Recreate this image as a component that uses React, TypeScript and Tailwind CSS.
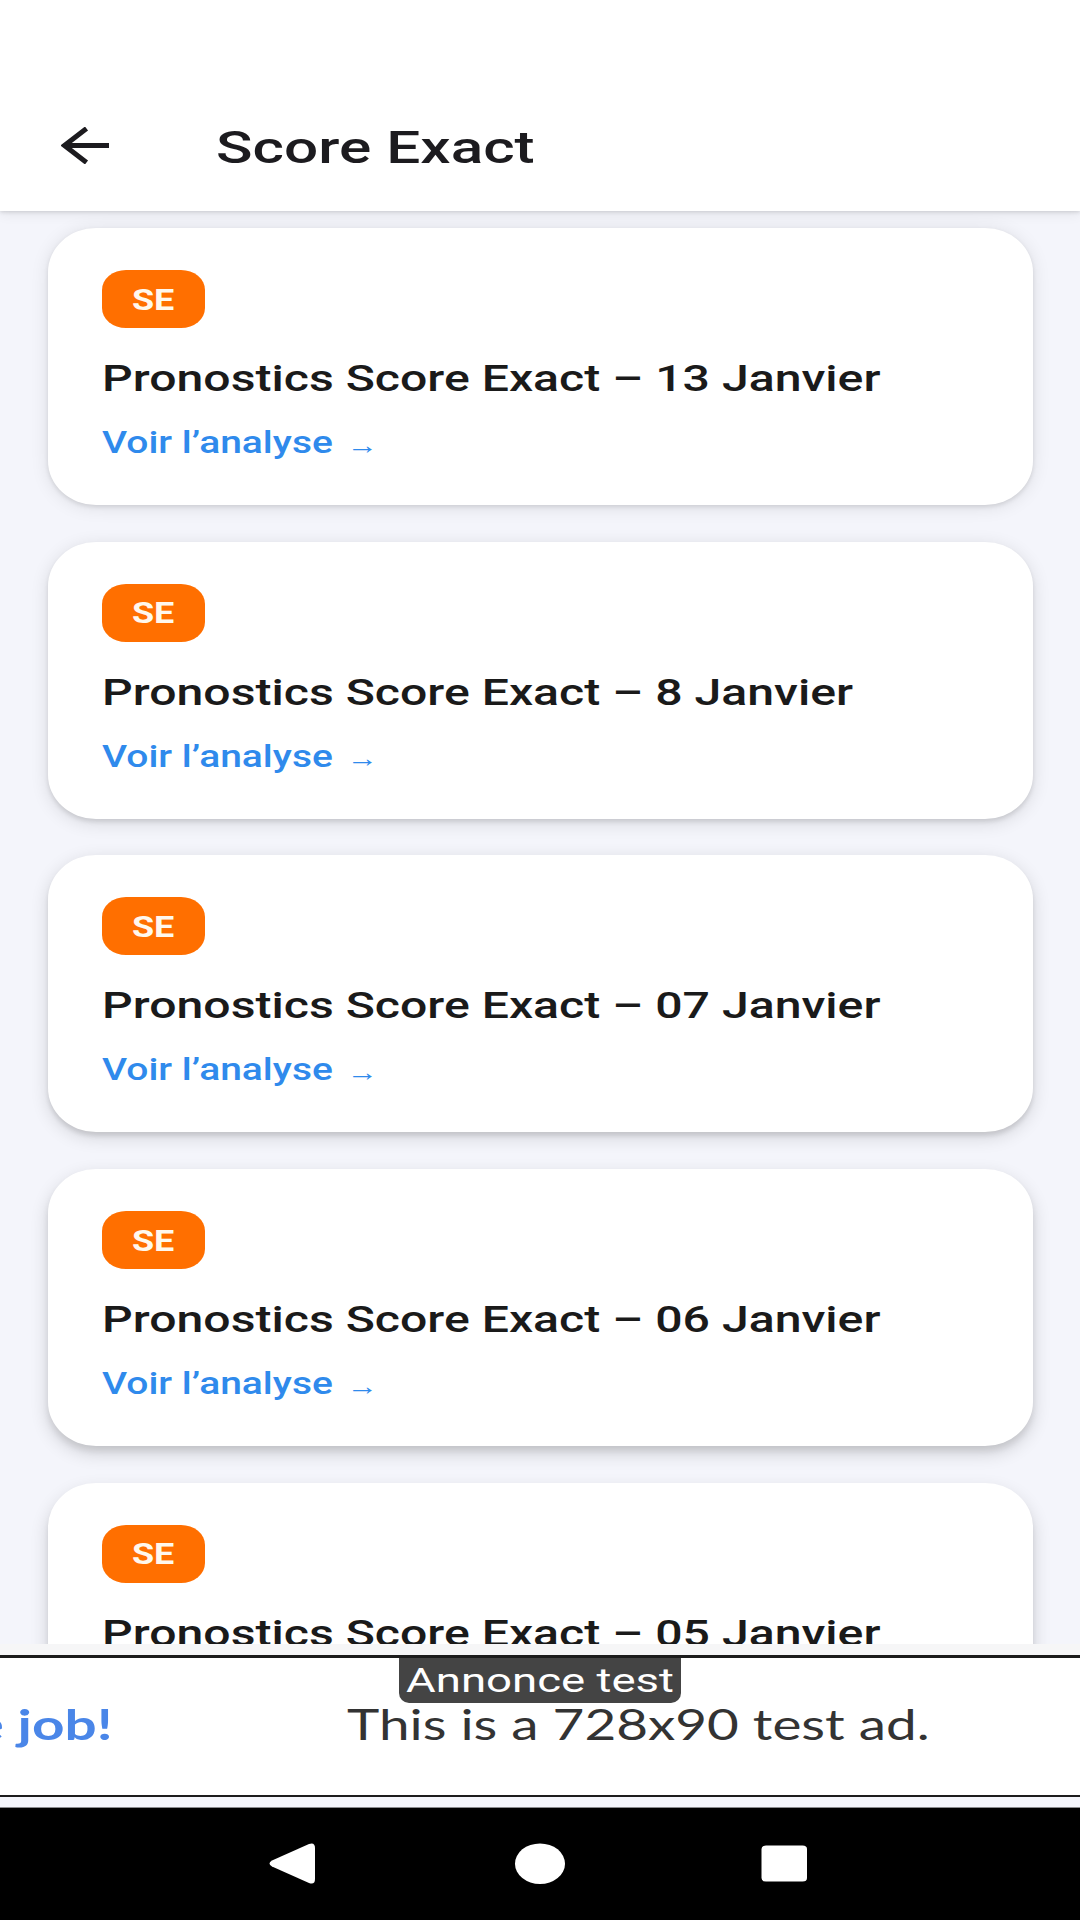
import React from 'react';

interface Pronostic {
    title: string;
    shadow: string;
}

interface PronosticCardProps {
    item: Pronostic;
}

// Shadows get longer towards the bottom of the screen
const pronostics: Pronostic[] = [
    { title: 'Pronostics Score Exact – 13 Janvier', shadow: 'shadow-[0_2px_4px_rgba(0,0,0,0.10),0_2px_18px_rgba(0,0,0,0.10)]' },
    { title: 'Pronostics Score Exact – 8 Janvier', shadow: 'shadow-[0_3px_4px_rgba(0,0,0,0.10),0_4px_18px_rgba(0,0,0,0.12)]' },
    { title: 'Pronostics Score Exact – 07 Janvier', shadow: 'shadow-[0_4px_4px_rgba(0,0,0,0.10),0_5px_18px_rgba(0,0,0,0.14)]' },
    { title: 'Pronostics Score Exact – 06 Janvier', shadow: 'shadow-[0_5px_6px_rgba(0,0,0,0.08),0_7px_18px_rgba(0,0,0,0.16)]' },
    { title: 'Pronostics Score Exact – 05 Janvier', shadow: 'shadow-[0_6px_5px_rgba(0,0,0,0.08),0_8px_18px_rgba(0,0,0,0.16)]' },
];

const Header: React.FC = () => (
    <header className="relative z-10 h-[211px] shrink-0 bg-white pt-[80px] shadow-[0_1px_4px_rgba(0,0,0,0.14),0_3px_12px_rgba(0,0,0,0.07)]">
        <div className="flex h-[131px] items-center pl-[61px]">
            <button aria-label="Retour" className="-mt-px">
                <svg width="48" height="37" viewBox="0 0 48 37" fill="none" stroke="#1c1b1f" strokeWidth="5">
                    <path d="M4 18.5H48" />
                    <path d="M25.5 1.5L3.5 18.5L25.5 35.5" />
                </svg>
            </button>
            <h1 className="ml-[107px] mt-[4px] origin-left scale-x-[1.34] whitespace-nowrap text-[45px] font-medium leading-[54px] text-[#1c1b1f]">
                Score Exact
            </h1>
        </div>
    </header>
);

const PronosticCard: React.FC<PronosticCardProps> = ({ item }) => (
    <article className={`h-[277px] shrink-0 rounded-[48px/44px] bg-white pl-[54px] pt-[42px] ${item.shadow}`}>
        <div className="flex h-[58px] w-[103px] items-center justify-center rounded-[24px/20px] bg-[#ff6f00] pt-[2px]">
            <span className="scale-x-[1.24] text-[29px] font-bold leading-none text-[#fff8ee]">SE</span>
        </div>
        <h2 className="mt-[29px] w-max origin-left scale-x-[1.302] whitespace-nowrap text-[37px] font-medium leading-[43px] text-[#1a1a1a]">
            {item.title}
        </h2>
        <a className="mt-[25px] flex w-max origin-left scale-x-[1.257] items-center whitespace-nowrap text-[31px] font-medium leading-[36px] text-[#2f8aec]">
            Voir l’analyse
            <span className="ml-[11px] mt-[4px] text-[25px] font-normal leading-none">→</span>
        </a>
    </article>
);

const AdBanner: React.FC = () => (
    <div className="relative h-[142px] shrink-0 overflow-hidden border-b-2 border-t-3 border-[#1c1c1c] bg-white font-['Lato']">
        <div className="absolute left-[399px] top-[-3px] flex h-[48px] w-[282px] items-center justify-center rounded-b-[10px] bg-[#444] pt-[2px]">
            <span className="scale-x-[1.34] whitespace-nowrap font-[Roboto,sans-serif] text-[34px] leading-none text-white">Annonce test</span>
        </div>
        <div className="flex items-center pt-[45px] leading-[42px]">
            <div className="flex w-[347px] shrink-0">
                <span className="flex w-[113px] justify-end">
                    <span className="origin-right scale-x-[1.35] whitespace-nowrap text-[42px] font-bold text-[#4a86e8]">Nice job!</span>
                </span>
            </div>
            <span className="origin-left scale-x-[1.305] whitespace-nowrap text-[42px] text-[#333]">
                This is a 728x90 test ad.
            </span>
        </div>
    </div>
);

const NavigationBar: React.FC = () => (
    <nav className="h-[112px] shrink-0 bg-black">
        <svg width="1080" height="112" viewBox="0 0 1080 112" fill="#fff">
            <path d="M272 52.5L309 36Q315 34 315 40V71Q315 77 309 75L272 58.500Q267 55.500 272 52.500Z" />
            <ellipse cx="540" cy="55.700" rx="25" ry="20.300" />
            <rect x="761.500" y="37.500" width="45.500" height="36" rx="4.500" ry="3.500" />
        </svg>
    </nav>
);

const App: React.FC = () => (
    <div className="flex h-[1920px] w-[1080px] flex-col overflow-hidden bg-[#f4f5fb] font-[Roboto,sans-serif]">
        <Header />
        <main className="flex h-[1433px] shrink-0 flex-col gap-[36.700px] overflow-hidden px-[47.500px] pt-[17px]">
            {pronostics.map((item) => (
                <PronosticCard key={item.title} item={item} />
            ))}
        </main>
        <div className="h-[11px] shrink-0 bg-[#f6f6f7]" />
        <AdBanner />
        <div className="h-[11px] shrink-0 border-b border-[#8a8a8e]" />
        <NavigationBar />
    </div>
);

export default App;
